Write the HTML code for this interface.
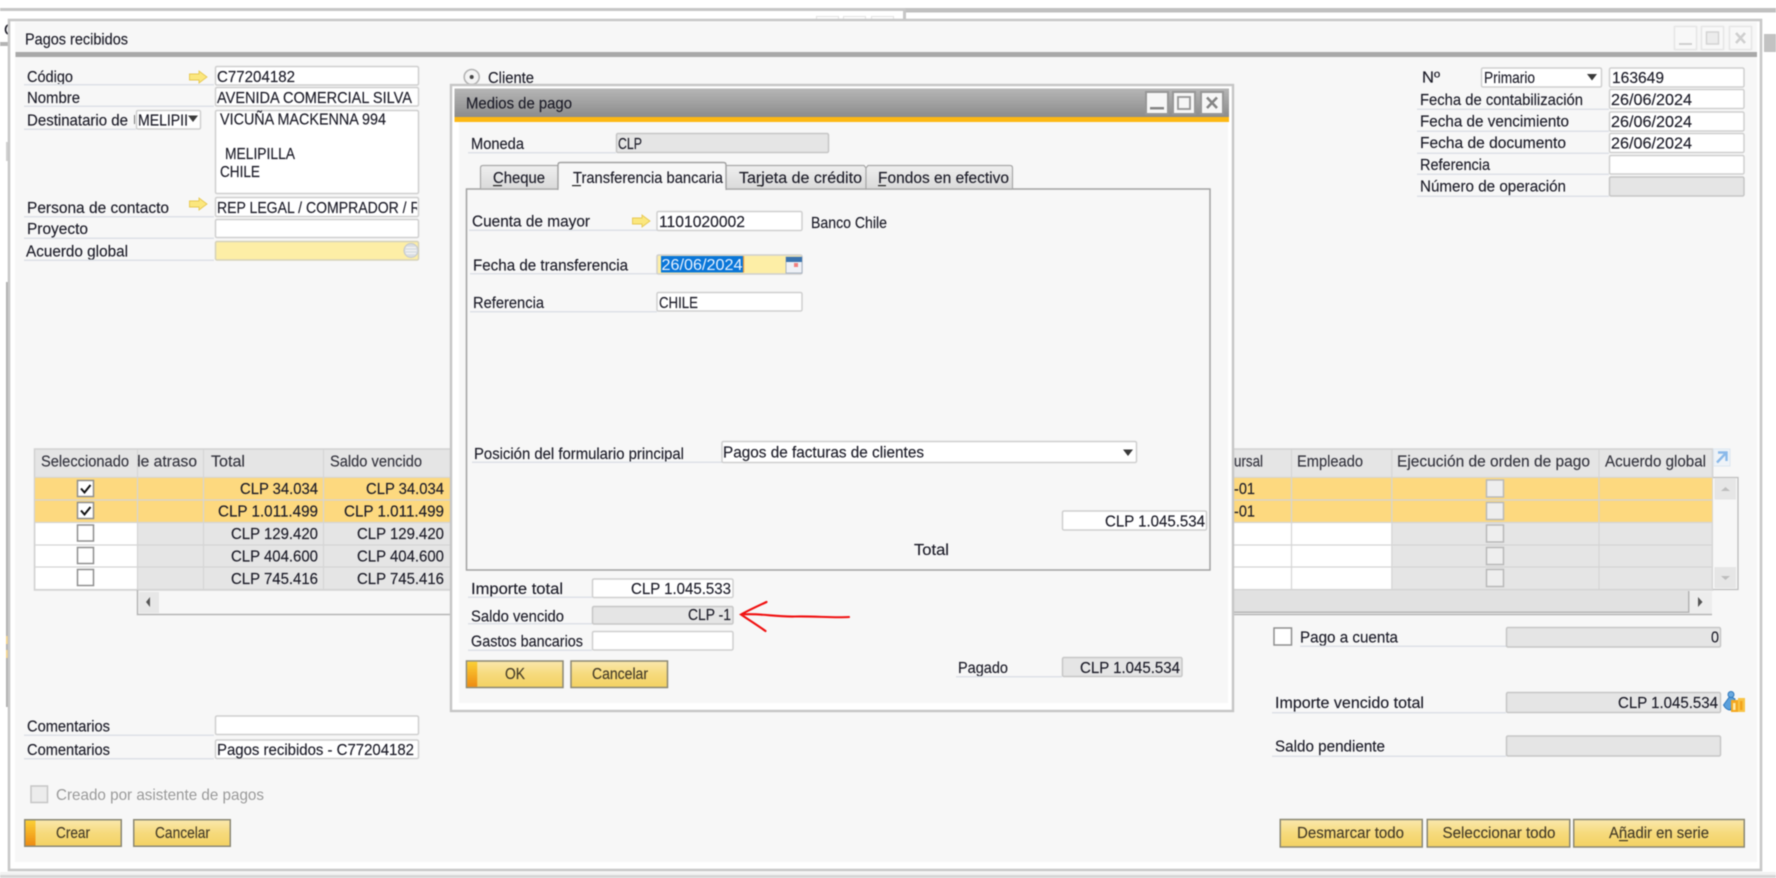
<!DOCTYPE html>
<html lang="es"><head><meta charset="utf-8"><title>Pagos recibidos</title>
<style>
html,body{margin:0;padding:0;background:#fff;width:1776px;height:878px;overflow:hidden}
svg{display:block;position:absolute;left:0;top:0;filter:blur(.4px)}
text{font-family:"Liberation Sans",Arial,sans-serif;font-size:15.6px;fill:#1b1b27;stroke:#1b1b27;stroke-width:.14px}
text.bt{fill:#453c28;stroke:#453c28}
text.hd{fill:#33333d;stroke:#33333d}
.f{fill:#fff;stroke:#cfcfcf;stroke-width:1.5}
.g{fill:#e5e5e5;stroke:#c6c6c6;stroke-width:1.5}
.u{fill:#dde1e7}
.ck{fill:#fff;stroke:#8f8f8f;stroke-width:1.5}
.ck2{fill:#eeeeee;stroke:#b9b9b9;stroke-width:1.5}
.sep{stroke:#d5d5d5;stroke-width:1.2}
.b{fill:url(#btn);stroke:#8b8875;stroke-width:1.5}
.wb{fill:#f6f6f6;stroke:#979797;stroke-width:2}
.wc{fill:#f8f8f8;stroke:#e6e6e6;stroke-width:1.5}
.ar{fill:#fbe77e;stroke:#e7c850;stroke-width:.9}
</style></head><body>
<svg width="1776" height="878" viewBox="0 0 1776 878" xmlns="http://www.w3.org/2000/svg">
<defs>
<linearGradient id="btn" x1="0" y1="0" x2="0" y2="1"><stop offset="0" stop-color="#fae8ae"/><stop offset=".5" stop-color="#f6da7c"/><stop offset="1" stop-color="#f4d263"/></linearGradient>
<linearGradient id="or" x1="0" y1="0" x2="0" y2="1"><stop offset="0" stop-color="#fbd036"/><stop offset="1" stop-color="#ee8c12"/></linearGradient>
<linearGradient id="tb" x1="0" y1="0" x2="0" y2="1"><stop offset="0" stop-color="#b6b6b6"/><stop offset="1" stop-color="#8b8b8b"/></linearGradient>
<linearGradient id="tab" x1="0" y1="0" x2="0" y2="1"><stop offset="0" stop-color="#efefef"/><stop offset="1" stop-color="#dadada"/></linearGradient>
<clipPath id="c1"><rect x="216" y="198" width="201" height="18"/></clipPath>
<clipPath id="c2"><rect x="138" y="450" width="64" height="26"/></clipPath>
<clipPath id="c0"><rect x="0" y="20" width="8" height="20"/></clipPath>
</defs>

<!-- desktop behind -->
<rect width="1776" height="878" fill="#fff"/>
<rect x="0" y="8" width="905" height="3" fill="#c6c6c6"/>
<rect x="905" y="8" width="871" height="4.5" fill="#c0c0c0"/>
<rect x="903" y="9" width="3" height="10" fill="#c6c6c6"/>
<rect x="816.5" y="16.5" width="22" height="6" fill="none" stroke="#e2e2e2"/>
<rect x="843.5" y="16.5" width="22" height="6" fill="none" stroke="#e2e2e2"/>
<rect x="871.5" y="16.5" width="22" height="6" fill="none" stroke="#e2e2e2"/>
<g clip-path="url(#c0)"><text x="4" y="35">C</text></g>
<rect x="0" y="42" width="8" height="4" fill="#b4b4b4"/>
<rect x="1764" y="34" width="12" height="18" fill="#c2c2c2"/>
<rect x="6" y="142" width="2" height="19" fill="#d0d0d0"/>
<rect x="6" y="282" width="2" height="425" fill="#b0b0b0"/>
<rect x="6" y="636" width="2" height="8" fill="#f3d28a"/>
<rect x="6" y="650" width="2" height="8" fill="#f3d28a"/>
<rect x="0" y="875" width="1776" height="3" fill="#d6d6d6"/>
<rect x="0" y="872" width="1776" height="3" fill="#f2f2f2"/>

<!-- main window -->
<rect x="9" y="20" width="1752" height="850" fill="#fff" stroke="#c8c8c8" stroke-width="2.6"/>
<rect x="15" y="22" width="1742" height="840" fill="#f7f7f7"/>
<text x="25" y="44.5" textLength="103" lengthAdjust="spacingAndGlyphs">Pagos recibidos</text>
<rect x="15.5" y="52" width="1741.5" height="5" fill="#a9a9a9"/>

<!-- window controls -->
<rect x="1674.5" y="26.5" width="22" height="23" class="wc"/><rect x="1679" y="43" width="13" height="2" fill="#d0d0d0"/>
<rect x="1701.5" y="26.5" width="22" height="23" class="wc"/><rect x="1706.5" y="32" width="12" height="12" fill="#ececec" stroke="#d4d4d4" stroke-width="1.5"/>
<rect x="1729.5" y="26.5" width="22" height="23" class="wc"/><path d="M1736 33 L1745 43 M1745 33 L1736 43" stroke="#cfcfcf" stroke-width="2.5" fill="none"/>

<!-- left form -->
<text x="27" y="82" textLength="46" lengthAdjust="spacingAndGlyphs">Código</text>
<rect x="24" y="84" width="190" height="1.5" class="u"/>
<path class="ar" d="M189.5 74 H199 V71 L207 77 L199 83 V80 H189.5 Z"/>
<rect x="215.5" y="66.5" width="203" height="18.5" rx="1.5" class="f"/>
<text x="217" y="82" textLength="78" lengthAdjust="spacingAndGlyphs">C77204182</text>

<text x="27" y="103" textLength="53" lengthAdjust="spacingAndGlyphs">Nombre</text>
<rect x="24" y="105.5" width="190" height="1.5" class="u"/>
<rect x="215.5" y="87.5" width="203" height="18.5" rx="1.5" class="f"/>
<text x="217" y="103" textLength="195" lengthAdjust="spacingAndGlyphs">AVENIDA COMERCIAL SILVA</text>

<text x="27" y="125.5" textLength="101" lengthAdjust="spacingAndGlyphs">Destinatario de</text>
<rect x="134" y="115" width="1" height="9" fill="#777"/>
<rect x="24" y="128.5" width="112" height="1.5" class="u"/>
<rect x="136.5" y="110.5" width="64" height="18.5" rx="1.5" class="f"/>
<text x="138" y="125.5" textLength="50" lengthAdjust="spacingAndGlyphs">MELIPII</text>
<path d="M188 115.5 H198 L193 122 Z" fill="#3a3a3a"/>

<rect x="215.5" y="110.5" width="203" height="83" rx="1.5" class="f"/>
<text x="220" y="124.5" textLength="166" lengthAdjust="spacingAndGlyphs">VICUÑA MACKENNA 994</text>
<text x="225" y="159" textLength="70" lengthAdjust="spacingAndGlyphs">MELIPILLA</text>
<text x="220" y="177" textLength="40" lengthAdjust="spacingAndGlyphs">CHILE</text>

<text x="27" y="213" textLength="142" lengthAdjust="spacingAndGlyphs">Persona de contacto</text>
<rect x="24" y="216" width="190" height="1.5" class="u"/>
<path class="ar" d="M189.5 201 H199 V198 L207 204 L199 210 V207 H189.5 Z"/>
<rect x="215.5" y="197.5" width="203" height="19" rx="1.5" class="f"/>
<g clip-path="url(#c1)"><text x="217" y="213" textLength="213" lengthAdjust="spacingAndGlyphs">REP LEGAL / COMPRADOR / RE</text></g>

<text x="27" y="234" textLength="61" lengthAdjust="spacingAndGlyphs">Proyecto</text>
<rect x="24" y="237.5" width="190" height="1.5" class="u"/>
<rect x="215.5" y="219.5" width="203" height="18" rx="1.5" class="f"/>

<text x="26" y="256.5" textLength="102" lengthAdjust="spacingAndGlyphs">Acuerdo global</text>
<rect x="24" y="259.5" width="190" height="1.5" class="u"/>
<rect x="215.5" y="241.5" width="203" height="18.5" rx="1.5" fill="#fdeea6" stroke="#d6d2ba" stroke-width="1.5"/>
<circle cx="411" cy="250.5" r="7" fill="#d9dde2" stroke="#c4c8cc"/>
<path d="M406 247.5 H416 M405.5 250.5 H416.5 M406 253.5 H416" stroke="#f4f4f4" stroke-width="1.3"/>

<!-- radio -->
<circle cx="471.7" cy="77" r="7.5" fill="#f4f4f4" stroke="#b4b4b4" stroke-width="1.6"/>
<circle cx="471.7" cy="77" r="2" fill="#444"/>
<text x="488" y="83" textLength="46" lengthAdjust="spacingAndGlyphs">Cliente</text>

<!-- right header form -->
<text x="1422" y="82.5" textLength="18" lengthAdjust="spacingAndGlyphs">Nº</text>
<rect x="1481.5" y="68" width="120" height="19" rx="1.5" class="f"/>
<text x="1484" y="83" textLength="51" lengthAdjust="spacingAndGlyphs">Primario</text>
<path d="M1587 74 H1597 L1592 80.5 Z" fill="#3a3a3a"/>
<rect x="1609.5" y="68" width="134.5" height="19" rx="1.5" class="f"/>
<text x="1612" y="83" textLength="52" lengthAdjust="spacingAndGlyphs">163649</text>

<text x="1420" y="105" textLength="163" lengthAdjust="spacingAndGlyphs">Fecha de contabilización</text>
<rect x="1417" y="108.5" width="192" height="1.5" class="u"/>
<rect x="1609.5" y="89.5" width="134.5" height="19" rx="1.5" class="f"/>
<text x="1611" y="105" textLength="81" lengthAdjust="spacingAndGlyphs">26/06/2024</text>

<text x="1420" y="126.5" textLength="149" lengthAdjust="spacingAndGlyphs">Fecha de vencimiento</text>
<rect x="1417" y="130.5" width="192" height="1.5" class="u"/>
<rect x="1609.5" y="112" width="134.5" height="19" rx="1.5" class="f"/>
<text x="1611" y="127" textLength="81" lengthAdjust="spacingAndGlyphs">26/06/2024</text>

<text x="1420" y="148" textLength="146" lengthAdjust="spacingAndGlyphs">Fecha de documento</text>
<rect x="1417" y="152.5" width="192" height="1.5" class="u"/>
<rect x="1609.5" y="133.5" width="134.5" height="19" rx="1.5" class="f"/>
<text x="1611" y="148.5" textLength="81" lengthAdjust="spacingAndGlyphs">26/06/2024</text>

<text x="1420" y="170" textLength="70" lengthAdjust="spacingAndGlyphs">Referencia</text>
<rect x="1417" y="173.5" width="192" height="1.5" class="u"/>
<rect x="1609.5" y="155.5" width="134.5" height="18.5" rx="1.5" class="f"/>

<text x="1420" y="191.5" textLength="146" lengthAdjust="spacingAndGlyphs">Número de operación</text>
<rect x="1417" y="195.5" width="192" height="1.5" class="u"/>
<rect x="1609.5" y="177" width="134.5" height="19" rx="1.5" class="g"/>

<!-- table -->
<rect x="34.5" y="449" width="1678" height="141" fill="#e5e5e5" stroke="#d2d2d2" stroke-width="1.5"/>
<rect x="35" y="477.5" width="1678" height="45" fill="#fdd97f"/>
<rect x="35.5" y="523" width="102" height="66.5" fill="#fff"/>
<rect x="1234" y="523" width="157.5" height="66.5" fill="#fff"/>
<path class="sep" d="M35 477.3 H1713 M35 500 H1713 M35 522.5 H1713 M35 545 H1713 M35 567 H1713 M35 589.5 H1713"/>
<path class="sep" d="M137.5 449 V590 M203.5 449 V590 M323.5 449 V590 M1291.5 449 V590 M1391.8 449 V590 M1599 449 V590 M1712.7 449 V590"/>

<text class="hd" x="41" y="466.5" textLength="88" lengthAdjust="spacingAndGlyphs">Seleccionado</text>
<g clip-path="url(#c2)"><text class="hd" x="132" y="466.5" textLength="65" lengthAdjust="spacingAndGlyphs">de atraso</text></g>
<text class="hd" x="211" y="466.5" textLength="34" lengthAdjust="spacingAndGlyphs">Total</text>
<text class="hd" x="330" y="466.5" textLength="92" lengthAdjust="spacingAndGlyphs">Saldo vencido</text>
<text class="hd" x="1234" y="466.5" textLength="29" lengthAdjust="spacingAndGlyphs">ursal</text>
<text class="hd" x="1297" y="466.5" textLength="66" lengthAdjust="spacingAndGlyphs">Empleado</text>
<text class="hd" x="1397" y="466.5" textLength="193" lengthAdjust="spacingAndGlyphs">Ejecución de orden de pago</text>
<text class="hd" x="1605" y="466.5" textLength="101" lengthAdjust="spacingAndGlyphs">Acuerdo global</text>

<rect x="77.5" y="480.5" width="16" height="16" class="ck"/><path d="M81 488.5 L84.5 492.5 L90.5 485" stroke="#111" stroke-width="2" fill="none"/>
<rect x="77.5" y="502.5" width="16" height="16" class="ck"/><path d="M81 510.5 L84.5 514.5 L90.5 507" stroke="#111" stroke-width="2" fill="none"/>
<rect x="77.5" y="525" width="16" height="16" class="ck"/>
<rect x="77.5" y="547.5" width="16" height="16" class="ck"/>
<rect x="77.5" y="569.5" width="16" height="16" class="ck"/>

<text x="240" y="494" textLength="78" lengthAdjust="spacingAndGlyphs">CLP 34.034</text>
<text x="366" y="494" textLength="78" lengthAdjust="spacingAndGlyphs">CLP 34.034</text>
<text x="218" y="516.5" textLength="100" lengthAdjust="spacingAndGlyphs">CLP 1.011.499</text>
<text x="344" y="516.5" textLength="100" lengthAdjust="spacingAndGlyphs">CLP 1.011.499</text>
<text x="231" y="539" textLength="87" lengthAdjust="spacingAndGlyphs">CLP 129.420</text>
<text x="357" y="539" textLength="87" lengthAdjust="spacingAndGlyphs">CLP 129.420</text>
<text x="231" y="561.5" textLength="87" lengthAdjust="spacingAndGlyphs">CLP 404.600</text>
<text x="357" y="561.5" textLength="87" lengthAdjust="spacingAndGlyphs">CLP 404.600</text>
<text x="231" y="584" textLength="87" lengthAdjust="spacingAndGlyphs">CLP 745.416</text>
<text x="357" y="584" textLength="87" lengthAdjust="spacingAndGlyphs">CLP 745.416</text>
<text x="1234" y="494" textLength="21" lengthAdjust="spacingAndGlyphs">-01</text>
<text x="1234" y="516.5" textLength="21" lengthAdjust="spacingAndGlyphs">-01</text>

<rect x="1486.5" y="480" width="17" height="17" class="ck2"/>
<rect x="1486.5" y="502.5" width="17" height="17" class="ck2"/>
<rect x="1486.5" y="525" width="17" height="17" class="ck2"/>
<rect x="1486.5" y="547.5" width="17" height="17" class="ck2"/>
<rect x="1486.5" y="569.5" width="17" height="17" class="ck2"/>

<!-- expand icon -->
<rect x="1713.5" y="449" width="16.5" height="17" fill="#eef3f8" stroke="#dde6f0"/>
<path d="M1717 462.5 L1726 453 M1718 452.5 H1726.5 V461" stroke="#8ab9ea" stroke-width="2.4" fill="none"/>

<!-- vertical scrollbar -->
<path d="M1713 477.5 H1738 V589.5 H1713" fill="#f7f7f7" stroke="#bdbdbd" stroke-width="1.3"/>
<rect x="1714.5" y="478.5" width="21.5" height="21" fill="#e6e6e6"/>
<path d="M1721 491 H1730 L1725.5 487 Z" fill="#bdbdbd"/>
<rect x="1714.5" y="567" width="21.5" height="21" fill="#e6e6e6"/>
<path d="M1721 576 H1730 L1725.5 580 Z" fill="#bdbdbd"/>

<!-- horizontal scrollbar -->
<path d="M137.5 590 V614.5 H1712" fill="none" stroke="#b5b5b5" stroke-width="1.5"/>
<rect x="139" y="592" width="20" height="21" fill="#e7e7e7"/>
<path d="M150 597 V607 L146 602 Z" fill="#555"/>
<rect x="159" y="592" width="300" height="21" fill="#f7f7f7"/>
<rect x="1230" y="591" width="458.5" height="21.5" fill="#e1e1e1"/>
<rect x="1230" y="611.5" width="458.5" height="1.5" fill="#b5b5b5"/>
<rect x="1688" y="591" width="1.5" height="22" fill="#b5b5b5"/>
<rect x="1689.5" y="591.5" width="22.5" height="22" fill="#ededed"/>
<path d="M1698 597 V607 L1702.5 602 Z" fill="#555"/>

<!-- bottom right fields -->
<rect x="1274" y="628" width="17.5" height="17" class="ck"/>
<text x="1300" y="642.5" textLength="98" lengthAdjust="spacingAndGlyphs">Pago a cuenta</text>
<rect x="1300" y="645.5" width="206" height="1.5" class="u"/>
<rect x="1506.5" y="627.5" width="214" height="19.5" rx="1.5" class="g"/>
<text x="1711" y="642.5" textLength="8" lengthAdjust="spacingAndGlyphs">0</text>

<text x="1275" y="708" textLength="149" lengthAdjust="spacingAndGlyphs">Importe vencido total</text>
<rect x="1272" y="712" width="234" height="1.5" class="u"/>
<rect x="1506.5" y="692.5" width="214" height="20" rx="1.5" class="g"/>
<text x="1618" y="708" textLength="100" lengthAdjust="spacingAndGlyphs">CLP 1.045.534</text>
<path d="M1723.5 705 L1730 696 L1735 699 L1730.5 710 Q1726 710 1723.5 705 Z" fill="#5aa0dc" stroke="#2f78bd"/>
<circle cx="1731" cy="694.5" r="3" fill="#6aaae0" stroke="#2f78bd"/>
<rect x="1731" y="700" width="7" height="12" fill="#f4a81f"/>
<rect x="1738" y="698" width="7" height="14" fill="#f8c445"/>
<rect x="1733" y="703" width="2.5" height="7" fill="#fdeaa8"/>
<rect x="1740" y="701" width="2.5" height="9" fill="#f3a31c"/>

<text x="1275" y="751.5" textLength="110" lengthAdjust="spacingAndGlyphs">Saldo pendiente</text>
<rect x="1272" y="755.5" width="234" height="1.5" class="u"/>
<rect x="1506.5" y="736" width="214" height="20" rx="1.5" class="g"/>

<rect x="1280.25" y="819.5" width="142" height="27.5" class="b"/>
<text class="bt" x="1297" y="838" textLength="107" lengthAdjust="spacingAndGlyphs">Desmarcar todo</text>
<rect x="1427.25" y="819.5" width="142.5" height="27.5" class="b"/>
<text class="bt" x="1442.5" y="838" textLength="113" lengthAdjust="spacingAndGlyphs">Seleccionar todo</text>
<rect x="1573.75" y="819.5" width="170.5" height="27.5" class="b"/>
<text class="bt" x="1609" y="838" textLength="100" lengthAdjust="spacingAndGlyphs">Añadir en serie</text>
<rect x="1619" y="840" width="9" height="1.2" fill="#3c3525"/>

<!-- bottom left -->
<text x="27" y="731.5" textLength="83" lengthAdjust="spacingAndGlyphs">Comentarios</text>
<rect x="24" y="734.5" width="190" height="1.5" class="u"/>
<rect x="215.5" y="716" width="203" height="18.5" rx="1.5" class="f"/>
<text x="27" y="755" textLength="83" lengthAdjust="spacingAndGlyphs">Comentarios</text>
<rect x="24" y="758" width="190" height="1.5" class="u"/>
<rect x="215.5" y="740" width="203" height="18.5" rx="1.5" class="f"/>
<text x="217" y="755" textLength="197" lengthAdjust="spacingAndGlyphs">Pagos recibidos - C77204182</text>
<rect x="31" y="786" width="16.5" height="16.5" fill="#ececec" stroke="#c6c6c6" stroke-width="1.5"/>
<text x="56" y="800" textLength="208" lengthAdjust="spacingAndGlyphs" style="fill:#9a9a9a;stroke:none">Creado por asistente de pagos</text>
<rect x="24.75" y="819.75" width="96.5" height="26.5" class="b"/>
<rect x="25.5" y="820.5" width="10" height="25" fill="url(#or)"/>
<text class="bt" x="56" y="838" textLength="34" lengthAdjust="spacingAndGlyphs">Crear</text>
<rect x="133.75" y="819.75" width="96.5" height="26.5" class="b"/>
<text class="bt" x="155" y="838" textLength="55" lengthAdjust="spacingAndGlyphs">Cancelar</text>

<!-- dialog -->
<rect x="451" y="85" width="782" height="626" fill="#fff" stroke="#c6c6c6" stroke-width="2.4"/>
<rect x="459" y="122" width="769" height="581" fill="#f7f7f7"/>
<rect x="454.5" y="88.5" width="774.5" height="29" fill="url(#tb)"/>
<rect x="454.5" y="117" width="774.5" height="5" fill="#fdb813"/>
<text x="466" y="108.5" textLength="106" lengthAdjust="spacingAndGlyphs">Medios de pago</text>
<rect x="1146" y="92" width="22" height="22" class="wb"/><rect x="1150" y="107" width="14" height="2.5" fill="#858585"/>
<rect x="1173" y="92" width="22" height="22" class="wb"/><rect x="1178" y="97" width="12" height="12" fill="none" stroke="#959595" stroke-width="1.8"/>
<rect x="1201" y="92" width="22" height="22" class="wb"/><path d="M1207 97.5 L1217 108 M1217 97.5 L1207 108" stroke="#858585" stroke-width="2.6" fill="none"/>

<text x="471" y="149" textLength="53" lengthAdjust="spacingAndGlyphs">Moneda</text>
<rect x="468" y="152" width="148" height="1.5" class="u"/>
<rect x="616.5" y="133.5" width="212" height="19" rx="1.5" class="g"/>
<text x="618" y="149" textLength="24" lengthAdjust="spacingAndGlyphs">CLP</text>

<!-- tabs -->
<rect x="466.5" y="189" width="743.5" height="381" fill="#f7f7f7" stroke="#a2a2a2" stroke-width="1.5"/>
<path d="M480.5 189 V168 Q480.5 165.5 483 165.5 H558 V189 Z" fill="url(#tab)" stroke="#a8a8a8" stroke-width="1.2"/>
<text x="493" y="183" textLength="52" lengthAdjust="spacingAndGlyphs">Cheque</text>
<rect x="493" y="185" width="9" height="1.2" fill="#222"/>
<path d="M726 189 H866 V168 L864 165.5 H726 Z" fill="url(#tab)" stroke="#a8a8a8" stroke-width="1.2"/>
<text x="739" y="183" textLength="123" lengthAdjust="spacingAndGlyphs">Tarjeta de crédito</text>
<rect x="757" y="185" width="5" height="1.2" fill="#222"/>
<path d="M866 189 V168 L868 165.5 H1010 Q1012.5 165.5 1012.5 168 V189 Z" fill="url(#tab)" stroke="#a8a8a8" stroke-width="1.2"/>
<text x="878" y="183" textLength="131" lengthAdjust="spacingAndGlyphs">Fondos en efectivo</text>
<rect x="878" y="185" width="8" height="1.2" fill="#222"/>
<path d="M558 190 V165 Q558 162.5 560.5 162.5 H723.5 Q726 162.5 726 165 V190" fill="#f7f7f7" stroke="#a2a2a2" stroke-width="1.4"/>
<rect x="558.8" y="188" width="166.5" height="3" fill="#f7f7f7"/>
<text x="573" y="183" textLength="150" lengthAdjust="spacingAndGlyphs">Transferencia bancaria</text>
<rect x="572" y="185" width="9" height="1.2" fill="#222"/>

<text x="472" y="226.5" textLength="118" lengthAdjust="spacingAndGlyphs">Cuenta de mayor</text>
<rect x="469" y="229.5" width="188" height="1.5" class="u"/>
<path class="ar" d="M632.5 218 H642 V215 L650 221 L642 227 V224 H632.5 Z"/>
<rect x="657" y="211.5" width="145" height="19" rx="1.5" class="f"/>
<text x="659" y="227" textLength="86" lengthAdjust="spacingAndGlyphs">1101020002</text>
<text x="811" y="228" textLength="76" lengthAdjust="spacingAndGlyphs">Banco Chile</text>

<text x="473" y="270.5" textLength="155" lengthAdjust="spacingAndGlyphs">Fecha de transferencia</text>
<rect x="470" y="273" width="187" height="1.5" class="u"/>
<rect x="657" y="255" width="145" height="19" rx="1.5" fill="#fdeea6" stroke="#cfcfcf" stroke-width="1.5"/>
<rect x="661" y="256" width="82" height="16.5" fill="#0a76d8"/>
<rect x="743" y="256" width="1.2" height="16.5" fill="#f19b3c"/>
<text x="661.5" y="270" textLength="81" lengthAdjust="spacingAndGlyphs" style="fill:#e8f2ff;stroke:none">26/06/2024</text>
<rect x="786" y="257" width="16" height="16" fill="#eef1f6" stroke="#a9b4c2"/>
<rect x="786" y="257" width="16" height="5" fill="#3a73ad"/>
<rect x="794" y="263" width="4" height="4" fill="#f08080"/>

<text x="473" y="308" textLength="71" lengthAdjust="spacingAndGlyphs">Referencia</text>
<rect x="470" y="311" width="187" height="1.5" class="u"/>
<rect x="657" y="292.5" width="145" height="18.5" rx="1.5" class="f"/>
<text x="659" y="308" textLength="39" lengthAdjust="spacingAndGlyphs">CHILE</text>

<text x="474" y="459" textLength="210" lengthAdjust="spacingAndGlyphs">Posición del formulario principal</text>
<rect x="472" y="461.5" width="250" height="1.5" class="u"/>
<rect x="722" y="441.5" width="414.5" height="21" rx="1.5" class="f"/>
<text x="723" y="457.5" textLength="201" lengthAdjust="spacingAndGlyphs">Pagos de facturas de clientes</text>
<path d="M1123 449.5 H1133 L1128 456 Z" fill="#3a3a3a"/>

<rect x="1062.5" y="511" width="144" height="19" rx="1.5" class="f"/>
<text x="1105" y="526.5" textLength="100" lengthAdjust="spacingAndGlyphs">CLP 1.045.534</text>
<text x="914" y="555" textLength="35" lengthAdjust="spacingAndGlyphs">Total</text>

<text x="471" y="594" textLength="92" lengthAdjust="spacingAndGlyphs">Importe total</text>
<rect x="468" y="596.5" width="124" height="1.5" class="u"/>
<rect x="592.5" y="579" width="140.5" height="18.5" rx="1.5" class="f"/>
<text x="631" y="594" textLength="100" lengthAdjust="spacingAndGlyphs">CLP 1.045.533</text>

<text x="471" y="621.5" textLength="93" lengthAdjust="spacingAndGlyphs">Saldo vencido</text>
<rect x="468" y="623" width="124" height="1.5" class="u"/>
<rect x="592.5" y="606.5" width="140.5" height="17.5" rx="1.5" class="g"/>
<text x="688" y="620" textLength="43" lengthAdjust="spacingAndGlyphs">CLP -1</text>

<text x="471" y="646.5" textLength="112" lengthAdjust="spacingAndGlyphs">Gastos bancarios</text>
<rect x="468" y="649.5" width="124" height="1.5" class="u"/>
<rect x="592.5" y="631.5" width="140.5" height="18.5" rx="1.5" class="f"/>

<rect x="466.5" y="661" width="96.5" height="26.5" class="b"/>
<rect x="467.25" y="661.75" width="10" height="25" fill="url(#or)"/>
<text class="bt" x="505" y="679" textLength="20" lengthAdjust="spacingAndGlyphs">OK</text>
<rect x="571" y="661" width="96.5" height="26.5" class="b"/>
<text class="bt" x="592" y="679" textLength="56" lengthAdjust="spacingAndGlyphs">Cancelar</text>

<text x="958" y="673" textLength="50" lengthAdjust="spacingAndGlyphs">Pagado</text>
<rect x="956" y="676" width="106" height="1.5" class="u"/>
<rect x="1062.5" y="657.5" width="119.5" height="19" rx="1.5" class="g"/>
<text x="1080" y="673" textLength="100" lengthAdjust="spacingAndGlyphs">CLP 1.045.534</text>

<!-- red arrow -->
<path d="M849 617 C832 618 815 616 795 616.5 C775 617 760 613 741 614.5 M766.5 602 C758 606 749 610 741 614.5 C749 620 757 625 765.5 631" fill="none" stroke="#f01010" stroke-width="2.1" stroke-linecap="round"/>
</svg>
</body></html>
